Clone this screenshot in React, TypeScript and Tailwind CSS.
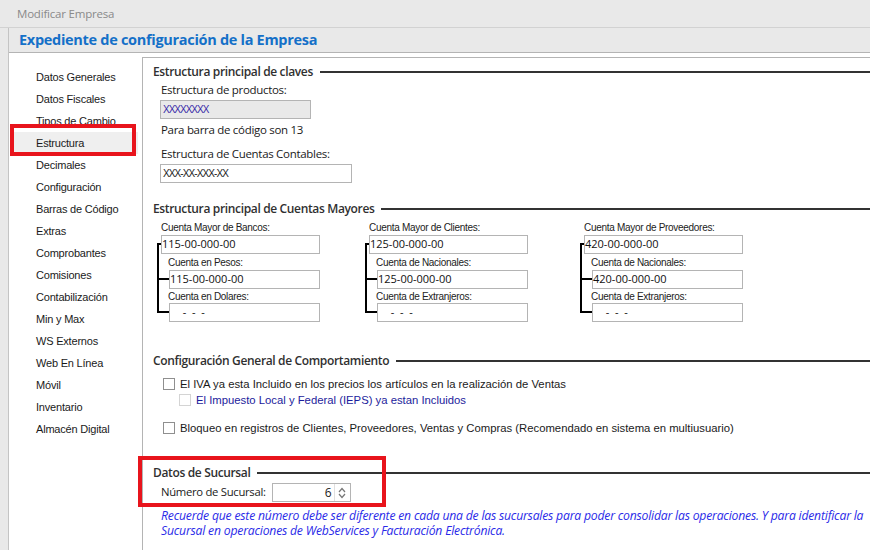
import React from "react";

const navItems = [
  "Datos Generales",
  "Datos Fiscales",
  "Tipos de Cambio",
  "Estructura",
  "Decimales",
  "Configuración",
  "Barras de Código",
  "Extras",
  "Comprobantes",
  "Comisiones",
  "Contabilización",
  "Min y Max",
  "WS Externos",
  "Web En Línea",
  "Móvil",
  "Inventario",
  "Almacén Digital",
];

interface Cuenta {
  main: string;
  mainValue: string;
  sub1: string;
  sub1Value: string;
  sub2: string;
}

const cuentas: Cuenta[] = [
  { main: "Cuenta Mayor de Bancos:", mainValue: "115-00-000-00", sub1: "Cuenta en Pesos:", sub1Value: "115-00-000-00", sub2: "Cuenta en Dolares:" },
  { main: "Cuenta Mayor de Clientes:", mainValue: "125-00-000-00", sub1: "Cuenta de Nacionales:", sub1Value: "125-00-000-00", sub2: "Cuenta de Extranjeros:" },
  { main: "Cuenta Mayor de Proveedores:", mainValue: "420-00-000-00", sub1: "Cuenta de Nacionales:", sub1Value: "420-00-000-00", sub2: "Cuenta de Extranjeros:" },
];

function Heading({ text }: { text: string }) {
  return (
    <div className="flex items-center h-[16px]">
      <span className="font-['Open_Sans'] font-semibold text-[12px] tracking-[-0.35px] text-[#303030] whitespace-nowrap">{text}</span>
      <div className="flex-1 h-[2px] bg-[#333] ml-[7px]" />
    </div>
  );
}

function Checkbox({ light }: { light?: boolean }) {
  return (
    <div className={`w-[12px] h-[12px] bg-white border ${light ? "border-[#d4d4d4]" : "border-[#8f8f8f]"}`} />
  );
}

function CuentaColumn({ c }: { c: Cuenta }) {
  return (
    <div className="relative">
      {/* bracket */}
      <svg className="absolute left-[-6px] top-0" width="16" height="100">
        <path d="M3 25 H6 M3 24 V94 M3 60 H14 M3 93 H14" stroke="#000" strokeWidth="2" fill="none" />
      </svg>
      <div className="h-[16px] flex items-center text-[10px] tracking-[-0.3px] font-['Liberation_Sans'] text-[#222]">{c.main}</div>
      <div className="w-[159px] h-[19px] border border-[#b4b4b4] bg-white flex items-center text-[11px] font-['Open_Sans'] text-[#111]">
        {c.mainValue}
      </div>
      <div className="ml-[7px] mt-[1px] h-[15px] flex items-center text-[10px] tracking-[-0.3px] font-['Liberation_Sans'] text-[#222]">{c.sub1}</div>
      <div className="ml-[8px] w-[151px] h-[19px] border border-[#b4b4b4] bg-white flex items-center text-[11px] font-['Open_Sans'] text-[#111]">
        {c.sub1Value}
      </div>
      <div className="ml-[7px] h-[14px] flex items-center text-[10px] tracking-[-0.3px] font-['Liberation_Sans'] text-[#222]">{c.sub2}</div>
      <div className="ml-[8px] w-[151px] h-[19px] border border-[#b4b4b4] bg-white flex items-center pl-[10px] text-[11px] font-['Open_Sans'] text-[#111] whitespace-pre">
        {" -  -  -"}
      </div>
    </div>
  );
}

export default function App() {
  return (
    <div className="relative w-[870px] h-[550px] overflow-hidden bg-[#e9e9e9] font-['Open_Sans',sans-serif]">
      {/* title bar */}
      <div className="h-[28px] border-b border-[#d2d2d2] flex items-center pl-[17px] text-[11.5px] tracking-[-0.2px] text-[#8a8a8a]">
        Modificar Empresa
      </div>

      <div className="ml-[8px] border-l border-[#c4c4c4] h-[522px] flex flex-col">
        {/* header */}
        <div className="h-[25px] border-b border-[#b4b4b4] flex items-center pl-[10px] text-[14.5px] font-bold tracking-[-0.3px] text-[#1470c8]">
          Expediente de configuración de la Empresa
        </div>

        <div className="flex-1 flex bg-white">
          {/* nav */}
          <div className="w-[133px] pt-[13px]">
            {navItems.map((item) => (
              <div
                key={item}
                className={`h-[22px] flex items-center pl-[23px] mx-[4px] text-[11px] tracking-[-0.2px] font-['Liberation_Sans'] text-[#1a1a1a] ${item === "Estructura" ? "bg-[#efefef]" : ""}`}
              >
                {item}
              </div>
            ))}
          </div>

          {/* panel */}
          <div className="flex-1 mt-[4px] border-l border-t border-[#b4b4b4] pl-[10px] text-[#1a1a1a]">
            <div className="mt-[6px]">
              <Heading text="Estructura principal de claves" />
            </div>
            <div className="ml-[8px] mt-[2px] h-[16px] flex items-center text-[11.5px] tracking-[-0.3px]">Estructura de productos:</div>
            <div className="ml-[7px] mt-[2px] w-[151px] h-[19px] border border-[#b4b4b4] bg-[#e9e9e9] flex items-center pl-[2px] text-[10px] tracking-[-1px] font-['Liberation_Sans'] text-[#3a2aa8]">
              XXXXXXXX
            </div>
            <div className="ml-[8px] mt-[3px] h-[16px] flex items-center text-[11.5px] tracking-[-0.3px]">Para barra de código son 13</div>
            <div className="ml-[8px] mt-[8px] h-[16px] flex items-center text-[11.5px] tracking-[-0.3px]">Estructura de Cuentas Contables:</div>
            <div className="ml-[7px] mt-[2px] w-[192px] h-[19px] border border-[#b4b4b4] bg-white flex items-center pl-[2px] text-[10px] tracking-[-0.9px] font-['Liberation_Sans'] text-[#222]">
              XXX-XX-XXX-XX
            </div>

            <div className="mt-[18px]">
              <Heading text="Estructura principal de Cuentas Mayores" />
            </div>
            <div className="ml-[8px] mt-[2px] grid grid-cols-[208px_215px_170px]">
              {cuentas.map((c) => (
                <CuentaColumn key={c.main} c={c} />
              ))}
            </div>

            <div className="mt-[31px]">
              <Heading text="Configuración General de Comportamiento" />
            </div>
            <div className="ml-[10px] mt-[7px] h-[16px] flex items-center gap-[5px] text-[11.3px] font-['Liberation_Sans'] text-[#1a1a1a]">
              <Checkbox />
              <span>El IVA ya esta Incluido en los precios los artículos en la realización de Ventas</span>
            </div>
            <div className="ml-[26px] h-[16px] flex items-center gap-[5px] text-[11.3px] font-['Liberation_Sans'] text-[#1c1c9c]">
              <Checkbox light />
              <span>El Impuesto Local y Federal (IEPS) ya estan Incluidos</span>
            </div>
            <div className="ml-[10px] mt-[12px] h-[16px] flex items-center gap-[5px] text-[11.3px] font-['Liberation_Sans'] text-[#1a1a1a]">
              <Checkbox />
              <span>Bloqueo en registros de Clientes, Proveedores, Ventas y Compras (Recomendado en sistema en multiusuario)</span>
            </div>

            <div className="mt-[29px]">
              <Heading text="Datos de Sucursal" />
            </div>
            <div className="ml-[8px] mt-[2px] h-[19px] flex items-center gap-[6px]">
              <span className="text-[11.3px] tracking-[-0.3px]">Número de Sucursal:</span>
              <div className="w-[79px] h-[19px] border border-[#b4b4b4] bg-white flex">
                <div className="flex-1 flex items-center justify-end pr-[2px] text-[12px]">6</div>
                <div className="w-[16px] flex flex-col items-center justify-center border-l border-[#e0e0e0]">
                  <svg width="8" height="6" viewBox="0 0 8 6"><path d="M1 5 L4 1.5 L7 5" stroke="#777" strokeWidth="1.2" fill="none" /></svg>
                  <svg width="8" height="6" viewBox="0 0 8 6"><path d="M1 1 L4 4.5 L7 1" stroke="#777" strokeWidth="1.2" fill="none" /></svg>
                </div>
              </div>
            </div>
            <div className="ml-[8px] mt-[6px] text-[12.2px] leading-[15px] italic tracking-[-0.2px] text-[#2a2ae8] whitespace-nowrap">
              Recuerde que este número debe ser diferente en cada una de las sucursales para poder consolidar las operaciones. Y para identificar la
              <br />
              Sucursal en operaciones de WebServices y Facturación Electrónica.
            </div>
          </div>
        </div>
      </div>

      {/* red annotation boxes */}
      <div className="absolute left-[10px] top-[124px] w-[126px] h-[32px] border-[4px] border-[#e8141c]" />
      <div className="absolute left-[138px] top-[456px] w-[248px] h-[51px] border-[4px] border-[#e8141c]" />
    </div>
  );
}
